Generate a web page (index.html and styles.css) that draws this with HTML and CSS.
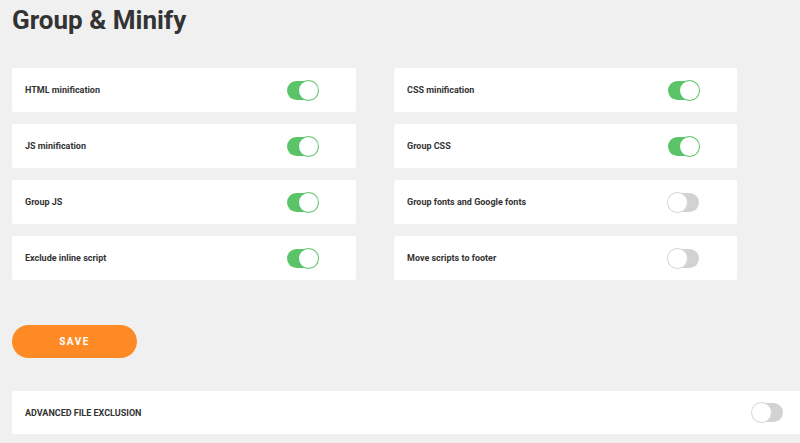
FILE: index.html
```html
<!DOCTYPE html>
<html lang="en">
  <head>
    <title>Group &amp; Minify</title>
    <meta charset="UTF-8">
    <meta name="viewport" content="width=device-width, initial-scale=1.0">
    <link rel="stylesheet" href="styles.css">
  </head>
  <body>
    <div id="app">
      <h1 class="title">Group &amp; Minify</h1>

      <div class="grid">
        <div class="card"><span class="label">HTML minification</span><span class="toggle on"></span></div>
        <div class="card"><span class="label">CSS minification</span><span class="toggle on"></span></div>
        <div class="card"><span class="label">JS minification</span><span class="toggle on"></span></div>
        <div class="card"><span class="label">Group CSS</span><span class="toggle on"></span></div>
        <div class="card"><span class="label">Group JS</span><span class="toggle on"></span></div>
        <div class="card"><span class="label">Group fonts and Google fonts</span><span class="toggle"></span></div>
        <div class="card"><span class="label">Exclude inline script</span><span class="toggle on"></span></div>
        <div class="card"><span class="label">Move scripts to footer</span><span class="toggle"></span></div>
      </div>

      <button class="save">SAVE</button>

      <div class="card wide">
        <span class="label">ADVANCED FILE EXCLUSION</span><span class="toggle"></span>
      </div>
    </div>
  </body>
</html>
```

FILE: styles.css
```css
* { box-sizing:border-box; margin:0; padding:0; }
html, body
{
    background-color:#f0f0f0;
    overflow:hidden;
}
body
{
    font-family:Roboto, "Liberation Sans", sans-serif;
    color:#333;
}
#app
{
    padding:0 0 0 12px;
    width:821px;
}
.title
{
    font-size:26px;
    font-weight:700;
    line-height:32px;
    padding-top:4px;
    margin-bottom:32px;
    color:#333;
}
.grid
{
    display:grid;
    grid-template-columns:344px 343px;
    column-gap:38px;
    row-gap:12px;
    width:725px;
}
.card
{
    background-color:#fff;
    height:44px;
    display:flex;
    align-items:center;
    justify-content:space-between;
    padding:0 38px 0 13px;
    border-radius:2px;
}
.label
{
    font-size:9px;
    font-weight:700;
    color:#333;
}
.toggle
{
    position:relative;
    width:31px;
    height:19px;
    border-radius:10px;
    background-color:#d2d2d2;
}
.toggle::after
{
    content:"";
    position:absolute;
    top:0;
    left:0;
    width:19px;
    height:19px;
    border-radius:50%;
    background-color:#fff;
    box-shadow:0 0 0 1px #d8d8d8;
}
.toggle.on
{
    background-color:#5bc468;
}
.toggle.on::after
{
    left:12px;
    box-shadow:0 0 0 1px #5bc468;
}
.save
{
    display:block;
    margin-top:45px;
    width:125px;
    height:33px;
    border:0;
    border-radius:17px;
    background-color:#fe8a25;
    color:#fff;
    font-family:Roboto, "Liberation Sans", sans-serif;
    font-size:10px;
    font-weight:700;
    letter-spacing:1.5px;
}
.wide
{
    margin-top:33px;
    width:809px;
    height:43px;
}
```
